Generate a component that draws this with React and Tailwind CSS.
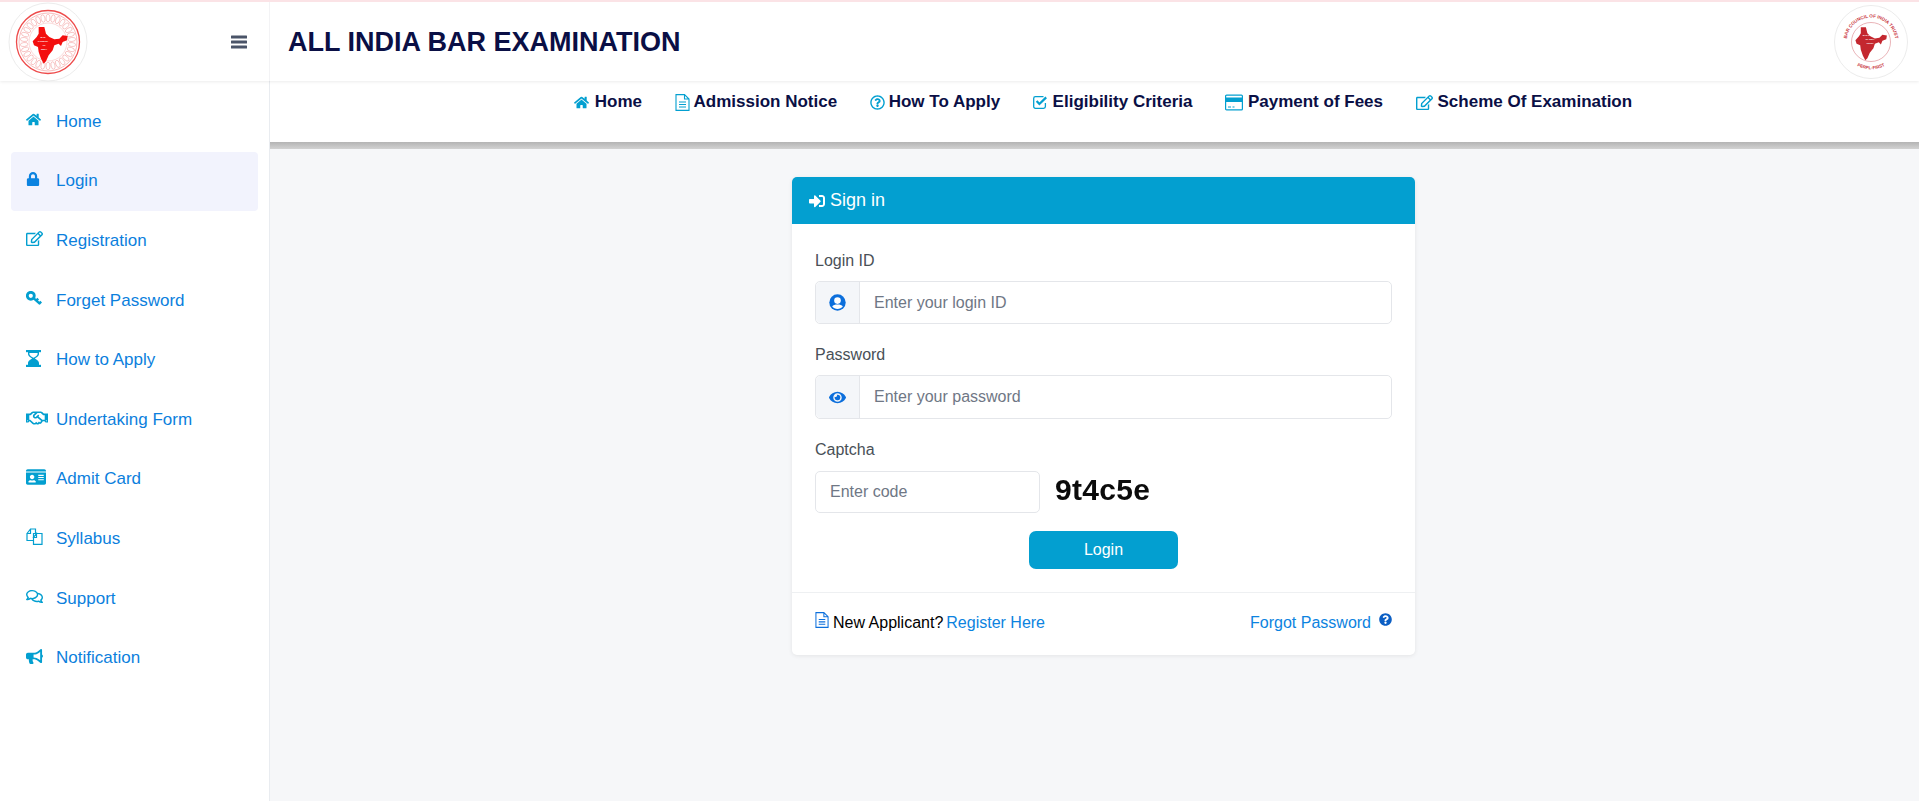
import React from "react";
import { FaHome, FaLock, FaRegEdit, FaRegHandshake, FaIdCard, FaRegComments, FaBullhorn, FaRegQuestionCircle, FaSignInAlt, FaEye, FaQuestionCircle } from "react-icons/fa";

const INDIA = "M118 75 L135 75 L140 95 L150 105 L165 112 L180 110 L190 100 L205 102 L203 115 L190 120 L185 132 L178 125 L165 130 L160 145 L148 160 L140 178 L133 185 L125 170 L118 150 L116 135 L104 130 L100 118 L112 105 L118 95 Z";

function LeftLogo() {
  const rays = Array.from({ length: 30 }, (_, i) => i * 12);
  return (
    <svg width="80" height="80" viewBox="-40 -40 80 80" className="shrink-0">
      <circle r="39" fill="#fff" stroke="#ececec" strokeWidth="1" />
      <circle r="31.5" fill="none" stroke="#ee4b4b" strokeWidth="1.3" />
      <circle r="29" fill="none" stroke="#f3a0a0" strokeWidth="0.7" />
      <circle r="19" fill="none" stroke="#f6c0c0" strokeWidth="0.6" />
      {rays.map((a) => (
        <ellipse key={a} cx="0" cy="-24" rx="2" ry="3.8" fill="none" stroke="#f3a5a5" strokeWidth="0.6" transform={`rotate(${a})`} />
      ))}
      <path d={INDIA} fill="#f30f0f" transform="scale(0.3333) translate(-146,-120)" />
      <g fill="#fff" fontSize="2.3" fontWeight="700" textAnchor="middle" className="font-['Liberation_Sans']">
        <text x="-5" y="-4">BAR</text>
        <text x="-5" y="0">COUNCIL</text>
        <text x="-4" y="4">OF</text>
        <text x="-4" y="8">INDIA</text>
      </g>
    </svg>
  );
}

function RightLogo() {
  return (
    <svg width="74" height="74" viewBox="-37 -37 74 74" className="shrink-0">
      <defs>
        <path id="top-arc" d="M-24 5 A24.5 24.5 0 1 1 24 5" />
        <path id="bottom-arc" d="M-15 23 A28 28 0 0 0 15 23" />
      </defs>
      <circle r="36.5" fill="#fff" stroke="#ececec" strokeWidth="1" />
      <circle r="19.5" fill="none" stroke="#e0949a" strokeWidth="0.7" />
      <text fontSize="4.6" fontWeight="700" fill="#c9343c" className="font-['Liberation_Sans']">
        <textPath href="#top-arc" startOffset="50%" textAnchor="middle">BAR COUNCIL OF INDIA TRUST</textPath>
      </text>
      <text fontSize="4.4" fontWeight="700" fill="#c9343c" className="font-['Liberation_Sans']">
        <textPath href="#bottom-arc" startOffset="50%" textAnchor="middle">PERPL-FIRST</textPath>
      </text>
      <path d={INDIA} fill="#c4272f" transform="scale(0.3) translate(-152,-124)" />
      <g fill="#fff" fontSize="2.1" fontWeight="700" textAnchor="middle" className="font-['Liberation_Sans']">
        <text x="-1" y="-6">BAR COUNCIL</text>
        <text x="-1" y="-2">OF INDIA</text>
        <text x="-1" y="2">TRUST</text>
      </g>
    </svg>
  );
}

function Hourglass(props) {
  return (
    <svg width="15" height="17" viewBox="0 0 15 17" fill="currentColor" {...props}>
      <rect x="0" y="0" width="15" height="2.2" />
      <rect x="0" y="14.8" width="15" height="2.2" />
      <path d="M2 2 H13 V4 C13 6.5 10 7.5 9 8.5 C10 9.5 13 10.5 13 13 V15 H2 V13 C2 10.5 5 9.5 6 8.5 C5 7.5 2 6.5 2 4 Z M3.4 2.9 V4 C3.4 5.6 5.4 6.6 7.5 7.7 C9.6 6.6 11.6 5.6 11.6 4 V2.9 Z" fillRule="evenodd" />
    </svg>
  );
}

function Files(props) {
  return (
    <svg width="17" height="17" viewBox="0 0 17 17" fill="none" stroke="currentColor" strokeWidth="1.2" {...props}>
      <path d="M1 5.5 L4.5 1 H9.5 V5 M4.5 1 V5.5 H1 V12.5 H7" />
      <path d="M7.5 5.5 H16 V16.4 H7.5 Z M7.5 9.5 L10.5 5.5 V9.5 Z" />
    </svg>
  );
}

function KeyIcon(props) {
  return (
    <svg width="16" height="15" viewBox="0 0 16 15" fill="none" {...props}>
      <circle cx="4.8" cy="4.8" r="3.5" stroke="currentColor" strokeWidth="2.8" />
      <path d="M7.5 7.2 L14 12.8 M10.2 9.6 L12.2 7.6 M13 12.8 L15.2 10.6" stroke="currentColor" strokeWidth="2.4" />
    </svg>
  );
}

function UserDisc() {
  return (
    <svg width="17" height="17" viewBox="0 0 17 17">
      <circle cx="8.5" cy="8.5" r="8.2" fill="currentColor" />
      <circle cx="8.5" cy="6.6" r="3.3" fill="#fff" />
      <path d="M3.2 12.6 C4.2 10.8 6 10.4 8.5 10.4 C11 10.4 12.8 10.8 13.8 12.6 C12.6 14.2 10.7 15 8.5 15 C6.3 15 4.4 14.2 3.2 12.6 Z" fill="#fff" />
    </svg>
  );
}

function DocLines({ className }) {
  return (
    <svg viewBox="0 0 15 17" fill="none" stroke="currentColor" strokeWidth="1.1" className={className}>
      <path d="M1 0.6 H9.5 L14 5 V16.4 H1 Z M9.5 0.6 V5 H14" />
      <path d="M4 8 H11 M4 10.5 H11 M4 13 H11" />
    </svg>
  );
}

function CheckBox({ className }) {
  return (
    <svg viewBox="0 0 15 14" fill="none" className={className}>
      <path d="M12.4 8 V11.5 C12.4 12.5 11.6 13.3 10.6 13.3 H2.4 C1.4 13.3 0.7 12.5 0.7 11.5 V3.4 C0.7 2.4 1.4 1.6 2.4 1.6 H10.5" stroke="currentColor" strokeWidth="1.3" />
      <path d="M3.6 6 L6.4 9 L13.2 2.4" stroke="currentColor" strokeWidth="2.2" />
    </svg>
  );
}

function CardIcon({ className }) {
  return (
    <svg viewBox="0 0 18 17" className={className} fill="none">
      <rect x="0.6" y="1.1" width="16.8" height="14.8" rx="1" stroke="currentColor" strokeWidth="1.2" />
      <rect x="1" y="3.5" width="16" height="4.5" fill="currentColor" />
      <path d="M3 13 H6 M7.5 13 H9.5" stroke="currentColor" strokeWidth="1.2" />
    </svg>
  );
}

const side = [
  ["Home", <FaHome className="text-[15px]" />],
  ["Login", <FaLock className="text-[14px] text-[#0c83e0]" />],
  ["Registration", <FaRegEdit className="text-[17px]" />],
  ["Forget Password", <KeyIcon />],
  ["How to Apply", <Hourglass />],
  ["Undertaking Form", <FaRegHandshake className="text-[22px]" />],
  ["Admit Card", <FaIdCard className="text-[20px]" />],
  ["Syllabus", <Files />],
  ["Support", <FaRegComments className="text-[17px]" />],
  ["Notification", <FaBullhorn className="text-[17px]" />],
];

const nav = [
  ["Home", <FaHome className="text-[15px]" />, "w-[21px]"],
  ["Admission Notice", <DocLines className="h-[17px] w-[15px]" />, "w-[19px]"],
  ["How To Apply", <FaRegQuestionCircle className="text-[15px]" />, "w-[19px]"],
  ["Eligibility Criteria", <CheckBox className="h-[14px] w-[15px]" />, "w-[20px]"],
  ["Payment of Fees", <CardIcon className="h-[17px] w-[18px]" />, "w-[23px]"],
  ["Scheme Of Examination", <FaRegEdit className="text-[17px]" />, "w-[22px]"],
];

function Field({ label, icon, placeholder, height }) {
  return (
    <div>
      <div className="text-[16px] leading-[24px] text-[#495057]">{label}</div>
      <div className={`mt-[8px] flex rounded-[5px] border border-[#e4e6ea] ${height}`}>
        <div className="flex w-[44px] shrink-0 items-center justify-center rounded-l-[5px] border-r border-[#e4e6ea] bg-[#f4f6f9] text-[#0c6fdc]">
          {icon}
        </div>
        <input placeholder={placeholder} className="min-w-0 flex-1 rounded-r-[5px] bg-white px-[14px] text-[16px] text-[#495057] outline-none placeholder:text-[#6f7785]" />
      </div>
    </div>
  );
}

export default function App() {
  return (
    <div className="flex h-screen flex-col overflow-hidden bg-[#f6f7f9] font-['Liberation_Sans',Arial,sans-serif]">
      <header className="relative z-10 flex h-[81px] shrink-0 border-t-2 border-[#fbe3e6] bg-white shadow-[0_1px_3px_rgba(0,0,0,0.08)]">
        <div className="flex w-[270px] shrink-0 items-center justify-between border-r border-[#f3f3f5] pl-[8px] pr-[22px]">
          <LeftLogo />
          <svg width="16" height="14" viewBox="0 0 16 14" fill="#4a5468">
            <rect y="0.5" width="16" height="3" rx="0.5" />
            <rect y="5.5" width="16" height="3" rx="0.5" />
            <rect y="10.5" width="16" height="3" rx="0.5" />
          </svg>
        </div>
        <div className="flex flex-1 items-center justify-between pl-[18px] pr-[11px]">
          <div className="pt-[2px] text-[27px] font-bold leading-none text-[#0a0f45]">ALL INDIA BAR EXAMINATION</div>
          <RightLogo />
        </div>
      </header>
      <div className="flex min-h-0 flex-1">
        <aside className="w-[270px] shrink-0 border-r border-[#e9ecf0] bg-white px-[11px] pt-[11px]">
          {side.map(([label, icon]) => (
            <div key={label} className={`flex h-[59.6px] items-center rounded-[4px] ${label === "Login" ? "bg-[#f2f3fd]" : ""}`}>
              <span className="flex w-[45px] shrink-0 -translate-y-[2px] items-center pl-[15px] text-[#039fd0]">
                {icon}
              </span>
              <span className="text-[17px] leading-[24px] text-[#0c7fdd]">{label}</span>
            </div>
          ))}
        </aside>
        <main className="min-w-0 flex-1">
          <nav className="flex h-[61px] items-start justify-center gap-[32.5px] bg-white pl-[17px] pt-[9px]">
            {nav.map(([label, icon, box]) => (
              <div key={label} className="flex h-[24px] items-center text-[17px] font-bold text-[#0a0f45]">
                <span className={`shrink-0 text-[#039fd0] ${box}`}>{icon}</span>
                <span>{label}</span>
              </div>
            ))}
          </nav>
          <div className="h-[7px] bg-gradient-to-b from-[#b4b4b4] to-[#d2d2d2]" />
          <div className="flex justify-center pl-[18px] pt-[28px]">
            <div className="w-[623px] overflow-hidden rounded-[5px] bg-white shadow-[0_1px_4px_rgba(0,0,0,0.08)]">
              <div className="flex h-[47px] items-center gap-[5px] bg-[#039fd0] pl-[17px] text-[18px] text-white">
                <FaSignInAlt className="text-[16px]" />
                <span>Sign in</span>
              </div>
              <div className="flex flex-col gap-[19px] px-[23px] pt-[25px]">
                <Field label="Login ID" height="h-[43px]" icon={<UserDisc />} placeholder="Enter your login ID" />
                <Field label="Password" height="h-[44px]" icon={<FaEye className="text-[17px]" />} placeholder="Enter your password" />
              </div>
              <div className="px-[23px] pt-[19px]">
                <div className="text-[16px] leading-[24px] text-[#495057]">Captcha</div>
                <div className="mt-[9px] flex items-center gap-[15px]">
                  <input placeholder="Enter code" className="h-[42px] w-[225px] rounded-[5px] border border-[#e4e6ea] px-[14px] text-[16px] outline-none placeholder:text-[#6f7785]" />
                  <span className="-translate-y-[2px] text-[30px] font-bold leading-none tracking-[0.3px] text-[#0b0b0b] blur-[0.4px]">9t4c5e</span>
                </div>
                <div className="mt-[18px] flex justify-center">
                  <button className="h-[38px] w-[149px] rounded-[7px] bg-[#039fd0] text-[16px] text-white">Login</button>
                </div>
              </div>
              <div className="mt-[23px] flex h-[63px] items-start justify-between border-t border-[#eef0f2] px-[23px] pt-[18px] text-[16px] leading-[24px]">
                <div className="flex items-start">
                  <DocLines className="mr-[4px] mt-[1px] h-[16px] w-[14px] text-[#0c6fdc]" />
                  <span className="text-black">New Applicant?</span>
                  <span className="ml-[3px] text-[#0c83e0]">Register Here</span>
                </div>
                <div className="flex items-start">
                  <span className="text-[#0c83e0]">Forgot Password</span>
                  <FaQuestionCircle className="ml-[8px] mt-[2px] text-[13px] text-[#0c5fc4]" />
                </div>
              </div>
            </div>
          </div>
        </main>
      </div>
    </div>
  );
}
